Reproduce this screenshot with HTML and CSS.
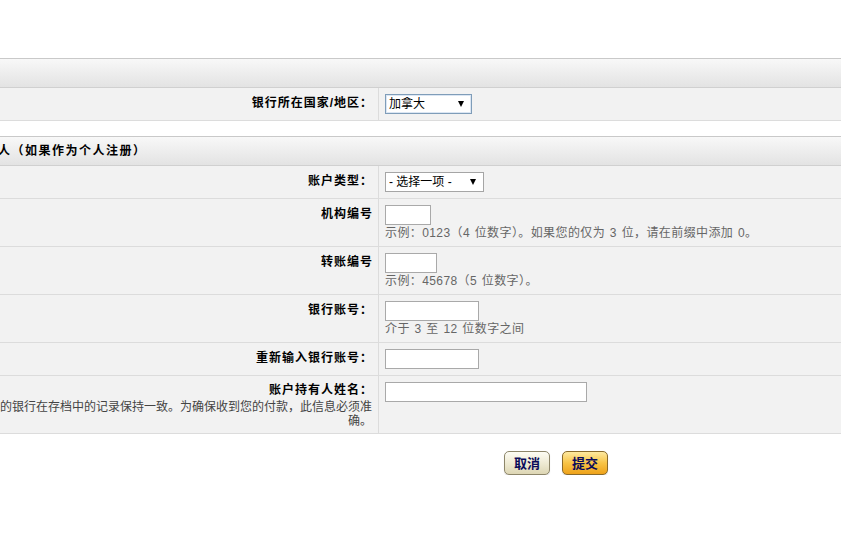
FILE: index.html
```html
<!DOCTYPE html>
<html lang="zh-CN">
<head>
<meta charset="utf-8">
<title>银行信息</title>
<link rel="stylesheet" href="styles.css">
</head>
<body>
<div class="page">
  <section class="panel">
    <div class="panel-head"></div>
    <div class="row">
      <div class="label">银行所在国家/地区：</div>
      <div class="field">
        <span class="select select-focus select-country">
          <select><option>加拿大</option></select>
        </span>
      </div>
    </div>
  </section>

  <section class="panel">
    <div class="panel-head">银行账户持有人（如果作为个人注册）</div>
    <div class="row">
      <div class="label">账户类型：</div>
      <div class="field">
        <span class="select select-type">
          <select><option>- 选择一项 -</option></select>
        </span>
      </div>
    </div>
    <div class="row">
      <div class="label">机构编号</div>
      <div class="field">
        <input class="text w-inst" type="text">
        <div class="hint">示例：0123（4 位数字）。如果您的仅为 3 位，请在前缀中添加 0。</div>
      </div>
    </div>
    <div class="row">
      <div class="label">转账编号</div>
      <div class="field">
        <input class="text w-transit" type="text">
        <div class="hint">示例：45678（5 位数字）。</div>
      </div>
    </div>
    <div class="row">
      <div class="label">银行账号：</div>
      <div class="field">
        <input class="text w-acct" type="text">
        <div class="hint">介于 3 至 12 位数字之间</div>
      </div>
    </div>
    <div class="row">
      <div class="label">重新输入银行账号：</div>
      <div class="field">
        <input class="text w-acct" type="text">
      </div>
    </div>
    <div class="row">
      <div class="label label-tall">账户持有人姓名：
        <div class="desc">名称必须与您的银行在存档中的记录保持一致。为确保收到您的付款，此信息必须准确。</div>
      </div>
      <div class="field">
        <input class="text w-name" type="text">
      </div>
    </div>
  </section>

  <div class="actions">
    <button class="btn btn-cancel" type="button">取消</button>
    <button class="btn btn-submit" type="button">提交</button>
  </div>
</div>
</body>
</html>
```
FILE: styles.css
```css
html, body {
  margin: 0;
  padding: 0;
  background: #fff;
  overflow: hidden;
}

body {
  font-family: "Liberation Sans", "Noto Sans CJK SC", sans-serif;
  font-size: 12px;
  color: #000;
}

.page {
  width: 1268px;
  margin-left: -78px;
  padding-top: 58px;
}

.panel {
  border-top: 1px solid #c9c9c9;
}

.panel + .panel {
  margin-top: 15px;
}

.panel-head {
  height: 28px;
  line-height: 29px;
  padding-left: 0;
  text-indent: -5px;
  background: linear-gradient(#f8f8f8, #e3e3e3);
  border-bottom: 1px solid #d0d0d0;
  font-weight: bold;
  letter-spacing: 1.5px;
  color: #000;
}

.row {
  display: grid;
  grid-template-columns: 457px 1fr;
  background: #f2f2f2;
  border-bottom: 1px solid #dcdcdc;
}

.label {
  padding: 5px 5px 3px 0;
  border-right: 1px solid #dcdcdc;
  text-align: right;
  font-weight: bold;
  letter-spacing: 1px;
  line-height: 20px;
  color: #000;
}

.label-tall {
  padding-top: 4px;
  padding-bottom: 5px;
}

.desc {
  margin-right: 1px;
  font-weight: normal;
  letter-spacing: 0;
  line-height: 14px;
  color: #444;
}

.field {
  padding: 6px;
}

.hint {
  margin-bottom: -2px;
  line-height: 17px;
  letter-spacing: 0.4px;
  word-spacing: 1px;
  color: #666;
}

.text {
  display: block;
  box-sizing: border-box;
  height: 20px;
  margin: 0;
  padding: 0 2px;
  border: 1px solid #a9a9a9;
  background: #fff;
  font: inherit;
}

.w-inst { width: 46px; }
.w-transit { width: 52px; }
.w-acct { width: 94px; }
.w-name { width: 202px; }

.select {
  position: relative;
  display: inline-block;
  box-sizing: border-box;
  height: 20px;
  vertical-align: top;
  border: 1px solid #a5a5a5;
  background: #fff;
}

.select-focus {
  border-color: #7f9db9;
  box-shadow: inset 0 0 0 1px #dbe6f3;
}

.select-country { width: 87px; }
.select-type { width: 99px; }

.select select {
  display: block;
  width: 100%;
  height: 18px;
  margin: 0;
  padding: 0 0 0 3px;
  border: 0;
  background: transparent;
  font: inherit;
  color: #000;
  appearance: none;
  -webkit-appearance: none;
  outline: none;
}

.select::after {
  content: "";
  position: absolute;
  right: 7px;
  top: 6px;
  width: 0;
  height: 0;
  border-left: 3px solid transparent;
  border-right: 3px solid transparent;
  border-top: 6px solid #000;
  pointer-events: none;
}

.actions {
  display: flex;
  justify-content: center;
  gap: 12px;
  margin-top: 17px;
}

.btn {
  box-sizing: border-box;
  width: 46px;
  height: 24px;
  padding: 0;
  border: 1px solid #8d866a;
  border-radius: 5px;
  font-family: "Noto Sans CJK SC", sans-serif;
  font-size: 13px;
  font-weight: bold;
  color: #0a0a5a;
  line-height: 20px;
  box-shadow: 0 1px 1px rgba(0, 0, 0, 0.15);
}

.btn-cancel {
  background: linear-gradient(#fdfcf4, #efebd4 50%, #ddd6b4);
}

.btn-submit {
  background: linear-gradient(#fee9a0, #f8c446 50%, #eea21a);
  border-color: #8a6a2a;
}
```
